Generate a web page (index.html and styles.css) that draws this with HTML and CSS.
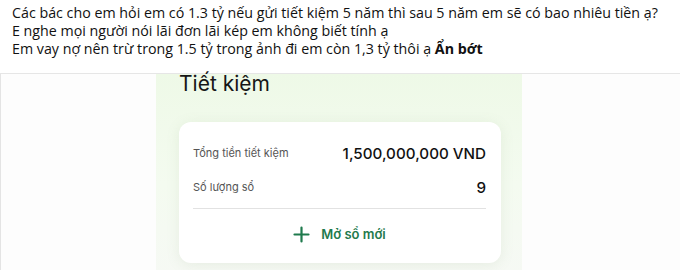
FILE: index.html
```html
<!DOCTYPE html>
<html lang="vi">
<head>
    <meta charset="UTF-8">
    <meta name="viewport" content="width=device-width, initial-scale=1.0">
    <title>Tiết kiệm</title>
    <link rel="stylesheet" href="styles.css">
</head>
<body>
    <div class="post-text">
        <p>Các bác cho em hỏi em có 1.3 tỷ nếu gửi tiết kiệm 5 năm thì sau 5 năm em sẽ có bao nhiêu tiền ạ?</p>
        <p>E nghe mọi người nói lãi đơn lãi kép em không biết tính ạ</p>
        <p>Em vay nợ nên trừ trong 1.5 tỷ trong ảnh đi em còn 1,3 tỷ thôi ạ <b>Ẩn bớt</b></p>
    </div>

    <!-- ảnh chụp màn hình app -->
    <div class="photo-area">
        <div class="phone-shot">
            <h2 class="shot-title">Tiết kiệm</h2>
            <div class="saving-card">
                <div class="card-row">
                    <span class="row-label">Tổng tiền tiết kiệm</span>
                    <span class="row-value">1,500,000,000 VND</span>
                </div>
                <div class="card-row">
                    <span class="row-label">Số lượng sổ</span>
                    <span class="row-value">9</span>
                </div>
                <div class="card-divider"></div>
                <div class="open-book">
                    <svg width="17" height="17" viewBox="0 0 17 17">
                        <path d="M8.5 1.5v14M1.5 8.5h14" stroke="#1f7a4d" stroke-width="2.2" stroke-linecap="round"/>
                    </svg>
                    <span>Mở sổ mới</span>
                </div>
            </div>
        </div>
    </div>
</body>
</html>
```
FILE: styles.css
```css
body {
    margin: 0;
    font-family: "Open Sans", "Noto Sans", Arial, sans-serif;
    background: #ffffff;
    height: 270px;
    overflow: hidden;
}
.post-text {
    padding: 4px 12px 0 12px;
    height: 69px;
    border-bottom: 1px solid #e6e6e6;
    font-size: 14.25px;
    line-height: 18px;
    color: #111;
    box-sizing: content-box;
}
.post-text p {
    margin: 0;
    white-space: nowrap;
}
.post-text b {
    font-weight: 700;
}
.photo-area {
    display: flex;
    justify-content: center;
    height: 200px;
    border-left: 1px solid #e4e4e4;
    background: #fdfdfd;
}
.phone-shot {
    width: 366px;
    margin-left: -3px;
    background: linear-gradient(180deg, #eef9e7 0%, #f4fbf0 55%, #f6f9f4 100%);
    padding: 0 21px 0 23px;
    box-sizing: border-box;
    font-family: Inter, "Noto Sans", Arial, sans-serif;
}
.shot-title {
    margin: -2px 0 0 0;
    font-size: 21px;
    font-weight: 400;
    line-height: 24px;
    color: #161616;
}
.saving-card {
    margin-top: 26px;
    background: #fff;
    border-radius: 12px;
    box-shadow: 0 2px 14px rgba(120, 150, 110, 0.12);
    padding: 14px 15px 0 14px;
    height: 141px;
    box-sizing: border-box;
}
.card-row {
    display: flex;
    justify-content: space-between;
    align-items: center;
    height: 34px;
}
.row-label {
    font-size: 11px;
    color: #555;
}
.row-value {
    font-size: 15.2px;
    font-weight: 500;
    color: #111;
}
.card-divider {
    height: 1px;
    background: #e2e2e2;
    margin-top: 4px;
}
.open-book {
    display: flex;
    justify-content: center;
    align-items: center;
    gap: 11px;
    height: 50px;
    color: #1f7a4d;
    font-size: 13px;
    font-weight: 600;
}
```
